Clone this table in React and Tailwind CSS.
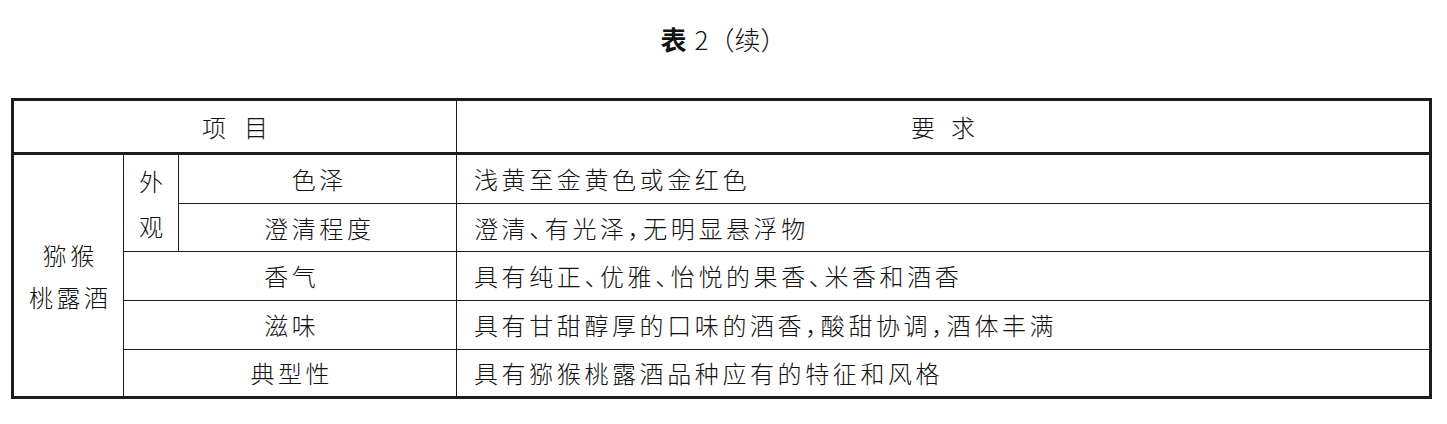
export default function App() {
  const txt =
    "font-['Noto_Sans_CJK_SC','Noto_Sans_CJK_JP',sans-serif] font-light text-[24px] leading-[24px] text-[#111] tracking-[3.6px]";
  const line = "border-[#1c1c1c]";
  const center = "flex items-center justify-center pl-[3.6px]";
  const req = "flex items-center pl-[17px] [font-feature-settings:'halt']";
  return (
    <div className="w-[1447px] h-[424px] bg-white">
      <div className="h-[98px] pt-[26px] flex justify-center font-['Noto_Sans_CJK_SC',sans-serif] text-[26px] leading-[26px] text-[#111]">
        <span className="font-semibold">表</span>
        <span className="ml-[8px] font-light">2（续）</span>
      </div>
      <div className={`ml-[11px] w-[1421px] border-[3px] ${line} ${txt}`}>
        <div className={`flex h-[54px] border-b-[3px] ${line}`}>
          <div className={`w-[443px] border-r ${line} flex items-center justify-center gap-[18px] tracking-normal`}>
            <span>项</span>
            <span>目</span>
          </div>
          <div className="flex-1 flex items-center justify-center gap-[16px] tracking-normal">
            <span>要</span>
            <span>求</span>
          </div>
        </div>
        <div className="grid grid-cols-[110px_55px_278px_972px] grid-rows-[49px_48px_49px_49px_46px]">
          <div className={`row-span-5 border-r ${line} flex flex-col items-center justify-center pl-[3.6px] leading-[42px]`}>
            <span>猕猴</span>
            <span>桃露酒</span>
          </div>
          <div className={`row-span-2 border-r border-b ${line} flex flex-col items-center justify-center pl-[3.6px] leading-[45px]`}>
            <span>外</span>
            <span>观</span>
          </div>
          <div className={`border-r border-b ${line} ${center}`}>色泽</div>
          <div className={`border-b ${line} ${req}`}>浅黄至金黄色或金红色</div>
          <div className={`border-r border-b ${line} ${center}`}>澄清程度</div>
          <div className={`border-b ${line} ${req}`}>澄清、有光泽，无明显悬浮物</div>
          <div className={`col-span-2 border-r border-b ${line} ${center}`}>香气</div>
          <div className={`border-b ${line} ${req}`}>具有纯正、优雅、怡悦的果香、米香和酒香</div>
          <div className={`col-span-2 border-r border-b ${line} ${center}`}>滋味</div>
          <div className={`border-b ${line} ${req}`}>具有甘甜醇厚的口味的酒香，酸甜协调，酒体丰满</div>
          <div className={`col-span-2 border-r ${line} ${center}`}>典型性</div>
          <div className={`${req}`}>具有猕猴桃露酒品种应有的特征和风格</div>
        </div>
      </div>
    </div>
  );
}
